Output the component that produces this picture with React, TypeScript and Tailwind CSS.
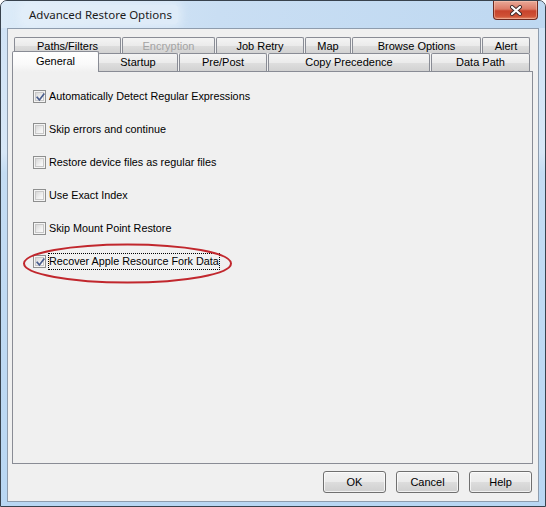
import React from "react";

const tabFace =
  "bg-[linear-gradient(to_bottom,#f4f4f4_0%,#ebebeb_50%,#dedede_51%,#d2d2d2_100%)]";

type TabProps = { label: string; w: string; disabled?: boolean; back?: boolean };

function Tab({ label, w, disabled, back }: TabProps) {
  return (
    <div
      className={`${w} ${back ? "h-[16px] pb-0" : "h-[18px] pb-[2px]"} ${tabFace} flex items-end justify-center border-x border-t border-[#898c95] rounded-t-[2px] text-[11px] leading-[13px] ${
        disabled ? "text-[#a3a3a3]" : "text-black"
      }`}
    >
      {label}
    </div>
  );
}

function Check({ checked }: { checked: boolean }) {
  return (
    <div className="w-[13px] h-[13px] shrink-0 border border-[#8e8f8f] bg-[#f4f4f4] p-[1px]">
      <div className="relative w-full h-full border border-[#c8c8c8] bg-[linear-gradient(135deg,#d8d8d8_0%,#f0f0f0_60%,#fbfbfb_100%)]">
        {checked && (
          <svg
            className="absolute left-[-1px] top-[-1px]"
            width="11"
            height="11"
            viewBox="0 0 11 11"
          >
            <path
              d="M2.2 5.4 L4.4 8 L8.8 2.2"
              fill="none"
              stroke="#4a5e8e"
              strokeWidth="1.7"
              strokeLinecap="square"
            />
          </svg>
        )}
      </div>
    </div>
  );
}

function Option({
  label,
  checked,
  focused,
}: {
  label: string;
  checked: boolean;
  focused?: boolean;
}) {
  return (
    <div className="h-[21px] flex items-center">
      <Check checked={checked} />
      <span
        className={`ml-[2px] px-[1px] h-[17px] flex items-center text-[10.8px] text-black ${
          focused ? "outline outline-1 outline-dotted outline-black -outline-offset-1" : ""
        }`}
      >
        {label}
      </span>
    </div>
  );
}

function Button({ label }: { label: string }) {
  return (
    <button className="w-[63px] h-[22px] rounded-[3px] border border-[#707070] bg-[linear-gradient(to_bottom,#f2f2f2_0%,#ebebeb_50%,#dddddd_51%,#cfcfcf_100%)] text-[11px] text-black shadow-[inset_0_0_0_1px_rgba(255,255,255,0.7)]">
      {label}
    </button>
  );
}

export default function App() {
  return (
    <div className="w-[546px] h-[507px] bg-white" style={{ fontFamily: '"Liberation Sans", Arial, sans-serif' }}>
      <div className="w-[546px] h-[507px] flex flex-col rounded-t-[7px] border border-[#38424d] bg-[linear-gradient(to_bottom,#cfe2f5_0%,#d7e7f7_30%,#c4dcf3_34%,#b9d7f3_100%)] overflow-hidden">
        {/* title bar */}
        <div className="h-[27px] shrink-0 flex items-start bg-[linear-gradient(100deg,#dcebf8_0%,#c9def3_40%,#bed8f1_100%)]">
          <div className="mt-[4px] ml-[22px] px-[6px] h-[19px] flex items-center rounded-[3px] bg-[#e6f0fa]/70 shadow-[0_0_8px_4px_rgba(235,243,251,0.6)]">
            <span
              className="text-[11.5px] text-[#1b1b1b] leading-none"
              style={{ fontFamily: '"Noto Sans", "Open Sans", sans-serif' }}
            >
              Advanced Restore Options
            </span>
          </div>
          <div className="ml-auto mr-[7px] w-[45px] h-[19px] rounded-b-[4px] border border-t-0 border-[#6e2a20] bg-[linear-gradient(to_bottom,#e9a998_0%,#dc7b67_45%,#c7432c_55%,#cf5236_85%,#e38a6a_100%)] flex items-center justify-center shadow-[inset_0_0_0_1px_rgba(255,210,190,0.45)]">
            <svg width="14" height="11" viewBox="0 0 14 11">
              <path d="M3 2 L11 9 M11 2 L3 9" stroke="#3e2a2a" strokeWidth="4" strokeLinecap="round" />
              <path d="M3 2 L11 9 M11 2 L3 9" stroke="#ffffff" strokeWidth="2.2" strokeLinecap="round" />
            </svg>
          </div>
        </div>

        {/* client area */}
        <div className="flex-1 mx-[6px] mb-[4px] border border-[#8e9cad] bg-[#f0f0f0] flex flex-col pt-[8px] pl-[4px] pr-[5px]">
          {/* back tab row */}
          <div className="h-[16px] flex pl-[2px] gap-[1px]">
            <Tab label="Paths/Filters" w="w-[107px]" back />
            <Tab label="Encryption" w="w-[93px]" back disabled />
            <Tab label="Job Retry" w="w-[88px]" back />
            <Tab label="Map" w="w-[46px]" back />
            <Tab label="Browse Options" w="w-[129px]" back />
            <Tab label="Alert" w="w-[48px]" back />
          </div>
          {/* front tab row */}
          <div className="h-[18px] flex items-end pl-[2px] gap-[1px]">
            <div className="relative z-10 w-[87px] h-[21px] -ml-[2px] -mr-[2px] -mb-[1px] border-x border-t border-[#898c95] rounded-t-[2px] bg-[linear-gradient(to_bottom,#ffffff_0%,#fafafa_60%,#f0f0f0_100%)] flex items-start justify-center pt-[3px] text-[11px] leading-[13px] text-black">
              General
            </div>
            <Tab label="Startup" w="w-[80px]" />
            <Tab label="Pre/Post" w="w-[88px]" />
            <Tab label="Copy Precedence" w="w-[162px]" />
            <Tab label="Data Path" w="w-[99px]" />
          </div>
          {/* tab page */}
          <div className="relative h-[393px] border border-[#898c95] bg-[#f0f0f0] pt-[14px] pl-[20px] flex flex-col gap-[12px]">
            <Option label="Automatically Detect Regular Expressions" checked />
            <Option label="Skip errors and continue" checked={false} />
            <Option label="Restore device files as regular files" checked={false} />
            <Option label="Use Exact Index" checked={false} />
            <Option label="Skip Mount Point Restore" checked={false} />
            <Option label="Recover Apple Resource Fork Data" checked focused />
            <svg
              className="absolute left-[9px] top-[170px] pointer-events-none"
              width="212"
              height="44"
              viewBox="0 0 212 44"
            >
              <ellipse cx="105.5" cy="21.5" rx="103.5" ry="19" fill="none" stroke="#c1272d" strokeWidth="2" />
            </svg>
          </div>
          {/* dialog buttons */}
          <div className="mt-[7px] mr-[1px] h-[22px] flex justify-end gap-[10px]">
            <Button label="OK" />
            <Button label="Cancel" />
            <Button label="Help" />
          </div>
        </div>
      </div>
    </div>
  );
}
